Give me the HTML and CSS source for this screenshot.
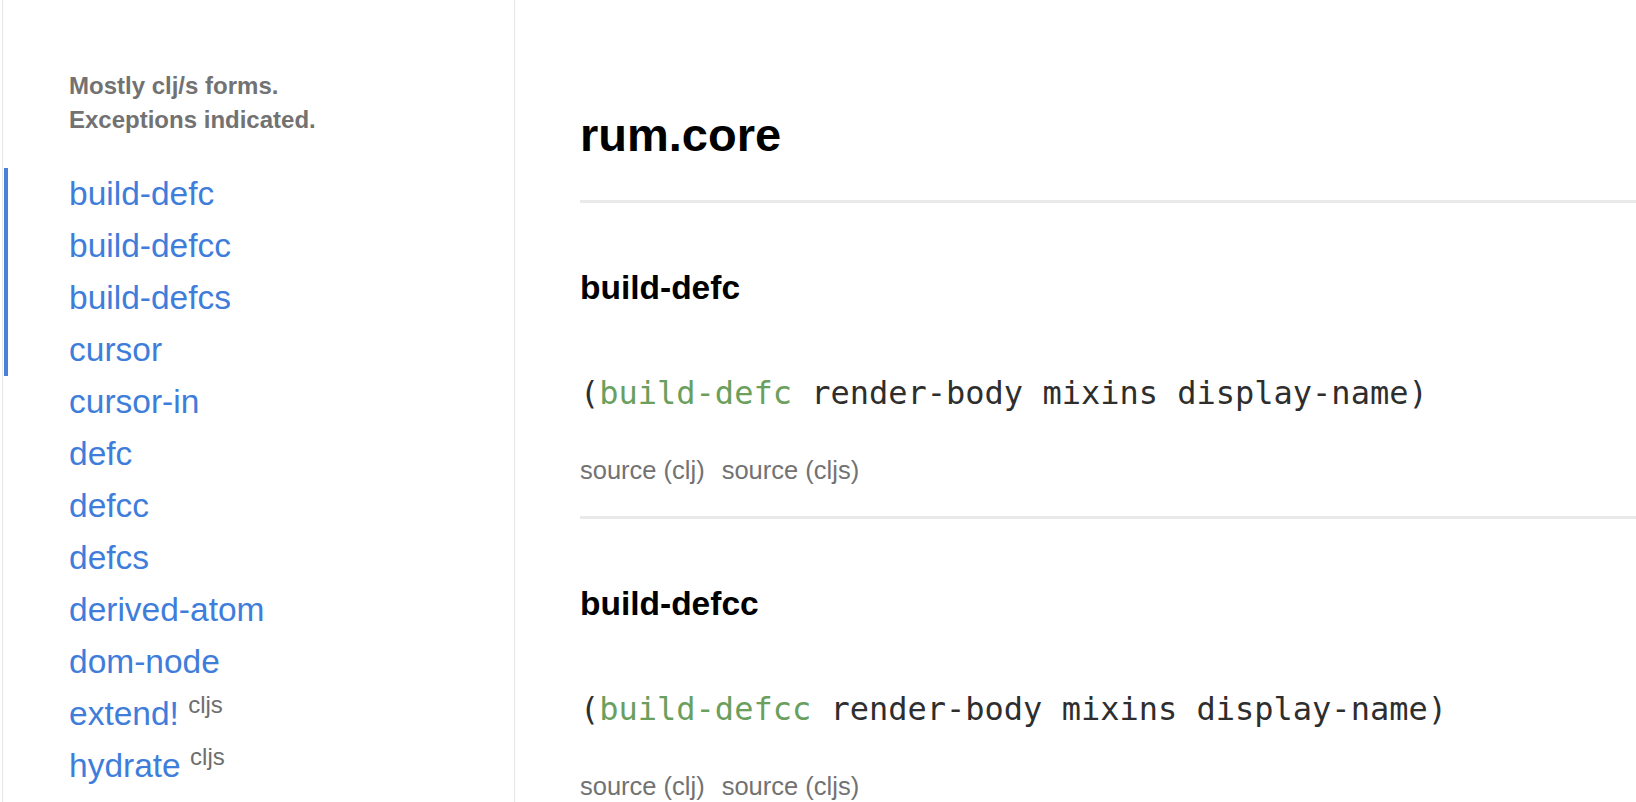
FILE: index.html
```html
<!DOCTYPE html>
<html lang="en">
<head>
<meta charset="utf-8">
<title>rum.core</title>
<link rel="stylesheet" href="styles.css">
</head>
<body>
<div class="page">
  <aside class="sidebar">
    <p class="intro">Mostly clj/s forms.<br>Exceptions indicated.</p>
    <nav class="nav">
      <a class="nav-link in-view" href="#build-defc">build-defc</a>
      <a class="nav-link in-view" href="#build-defcc">build-defcc</a>
      <a class="nav-link in-view" href="#build-defcs">build-defcs</a>
      <a class="nav-link in-view" href="#cursor">cursor</a>
      <a class="nav-link" href="#cursor-in">cursor-in</a>
      <a class="nav-link" href="#defc">defc</a>
      <a class="nav-link" href="#defcc">defcc</a>
      <a class="nav-link" href="#defcs">defcs</a>
      <a class="nav-link" href="#derived-atom">derived-atom</a>
      <a class="nav-link" href="#dom-node">dom-node</a>
      <a class="nav-link" href="#extend">extend! <span class="tag">cljs</span></a>
      <a class="nav-link" href="#hydrate">hydrate <span class="tag">cljs</span></a>
    </nav>
  </aside>
  <main class="main">
    <h1 class="ns-title">rum.core</h1>
    <section class="def" id="build-defc">
      <h3 class="def-name">build-defc</h3>
      <pre class="sig">(<span class="fn">build-defc</span> render-body mixins display-name)</pre>
      <div class="sources"><a class="src" href="#">source (clj)</a><a class="src" href="#">source (cljs)</a></div>
    </section>
    <section class="def" id="build-defcc">
      <h3 class="def-name">build-defcc</h3>
      <pre class="sig">(<span class="fn">build-defcc</span> render-body mixins display-name)</pre>
      <div class="sources"><a class="src" href="#">source (clj)</a><a class="src" href="#">source (cljs)</a></div>
    </section>
  </main>
</div>
</body>
</html>
```
FILE: styles.css
```css
html, body {
  margin: 0;
  padding: 0;
  background: #fff;
  overflow: hidden;
}

body {
  font-family: "Liberation Sans", Arial, Helvetica, sans-serif;
  color: #000;
}

.page {
  display: flex;
  align-items: flex-start;
  padding-left: 2px;
  height: 100vh;
  overflow: hidden;
}

.sidebar {
  box-sizing: border-box;
  width: 513px;
  flex: 0 0 513px;
  height: 100vh;
  border-left: 1px solid #e6e6e6;
  border-right: 1px solid #e6e6e6;
  padding-top: 69px;
}

.intro {
  margin: 0;
  padding-left: 66px;
  font-size: 24px;
  line-height: 34px;
  font-weight: bold;
  color: #727272;
}

.nav {
  display: flex;
  flex-direction: column;
  margin-top: 31px;
}

.nav-link {
  display: block;
  margin-left: 1px;
  border-left: 4px solid transparent;
  padding-left: 61px;
  font-size: 33.5px;
  line-height: 52px;
  color: #3f7ddb;
  text-decoration: none;
  white-space: nowrap;
}

.nav-link.in-view {
  border-left-color: #4a80dc;
}

.tag {
  font-size: 24px;
  line-height: 1;
  vertical-align: 12px;
  color: #6e6e6e;
}

.main {
  flex: 1 1 auto;
  min-width: 0;
  padding-left: 65px;
  padding-top: 108px;
}

.ns-title {
  margin: 0;
  font-size: 47px;
  line-height: 54px;
  font-weight: bold;
  color: #000;
  padding-bottom: 38px;
  border-bottom: 3px solid #e9e9e9;
}

.def {
  padding-top: 66px;
  padding-bottom: 31px;
  border-bottom: 3px solid #e9e9e9;
}

.def-name {
  margin: 0;
  font-size: 33.5px;
  line-height: 38px;
  font-weight: bold;
  color: #000;
}

.sig {
  margin: 67px 0 0 0;
  font-family: "DejaVu Sans Mono", "Liberation Mono", monospace;
  font-size: 32px;
  line-height: 38px;
  color: #2e2e2e;
  white-space: pre;
}

.fn {
  color: #6a9f5e;
}

.sources {
  display: flex;
  gap: 17px;
  margin-top: 43px;
  font-size: 25.5px;
  line-height: 30px;
}

.src {
  color: #727272;
  text-decoration: none;
}
```
